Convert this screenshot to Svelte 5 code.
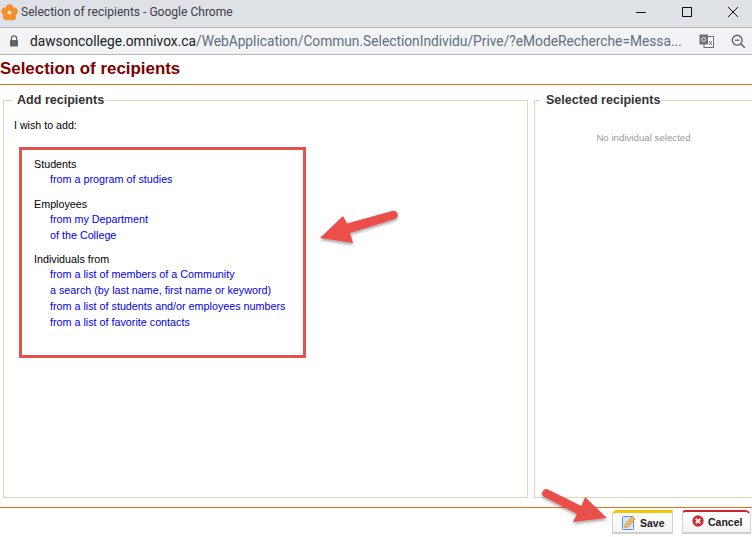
<script>
  const groups = [
    { title: 'Students', links: ['from a program of studies'] },
    { title: 'Employees', links: ['from my Department', 'of the College'] },
    { title: 'Individuals from', links: ['from a list of members of a Community', 'a search (by last name, first name or keyword)', 'from a list of students and/or employees numbers', 'from a list of favorite contacts'] }
  ];
</script>

<div class="win">
  <header class="titlebar">
    <svg class="flower" width="17" height="17" viewBox="0 0 18 18"><g fill="#f48f2e"><circle cx="9" cy="4.2" r="3.9"/><circle cx="13.8" cy="7.6" r="3.9"/><circle cx="12" cy="13.4" r="3.9"/><circle cx="6" cy="13.4" r="3.9"/><circle cx="4.2" cy="7.6" r="3.9"/></g><circle cx="9" cy="9" r="2.1" fill="#f9e3cc"/></svg>
    <span class="wintitle">Selection of recipients - Google Chrome</span>
    <div class="controls">
      <svg width="12" height="12" viewBox="0 0 12 12"><path d="M1 6.5h10" stroke="#111" stroke-width="1" fill="none"/></svg>
      <svg width="12" height="12" viewBox="0 0 12 12"><rect x="1.5" y="1.5" width="9" height="9" stroke="#111" stroke-width="1" fill="none"/></svg>
      <svg width="12" height="12" viewBox="0 0 12 12"><path d="M1 1l10 10M11 1L1 11" stroke="#111" stroke-width="1" fill="none"/></svg>
    </div>
  </header>
  <div class="urlbar">
    <svg class="lock" width="10" height="12" viewBox="0 0 10 12"><path d="M2.4 5V3.4a2.6 2.6 0 0 1 5.2 0V5" stroke="#5f6368" stroke-width="1.2" fill="none"/><rect x="1" y="5" width="8" height="6.6" rx="1" fill="#5f6368"/></svg>
    <span class="url"><span class="host">dawsoncollege.omnivox.ca</span>/WebApplication/Commun.SelectionIndividu/Prive/?eModeRecherche=Messa...</span>
    <svg class="translate" width="15" height="14" viewBox="0 0 15 14"><rect x="5" y="2.5" width="9.5" height="11" fill="#fff" stroke="#6d7074"/><rect x="0.5" y="0.5" width="8.5" height="10" fill="#6d7074"/><circle cx="4.7" cy="5.5" r="2" fill="none" stroke="#e8e8e8" stroke-width="1"/><path d="M10 7l3 4M13 7l-3 4" stroke="#6d7074"/></svg>
    <svg class="zoomicon" width="15" height="15" viewBox="0 0 15 15"><circle cx="6.2" cy="6.2" r="4.9" fill="none" stroke="#5f6368" stroke-width="1.4"/><path d="M9.8 9.8l4 4" stroke="#5f6368" stroke-width="1.6"/><path d="M3.8 6.2h4.8" stroke="#5f6368" stroke-width="1.3"/></svg>
  </div>

  <h1>Selection of recipients</h1>

  <main class="panels">
    <fieldset class="add">
      <legend>Add recipients</legend>
      <p class="wish">I wish to add:</p>
      <div class="box">
        {#each groups as g}
          <div class="group">
            <div class="gtitle">{g.title}</div>
            {#each g.links as l}<a href="#top" class="lnk">{l}</a>{/each}
          </div>
        {/each}
      </div>
    </fieldset>
    <fieldset class="sel">
      <legend>Selected recipients</legend>
      <p class="none">No individual selected</p>
    </fieldset>
  </main>

  <footer class="foot">
    <button class="btn save">
      <svg width="14" height="15" viewBox="0 0 14 15"><rect x="0.5" y="1.5" width="11" height="13" rx="1" fill="#d3e4f8" stroke="#5f93cf"/><path d="M2.5 12.5l.8-3.2 7-8 3 2.6-7 7.8z" fill="#f2b95a" stroke="#c08a35" stroke-width=".6"/></svg>
      Save
    </button>
    <button class="btn cancel">
      <svg class="x" width="12" height="12" viewBox="0 0 12 12"><circle cx="6" cy="6" r="5.7" fill="#c9303a"/><path d="M3.8 3.8l4.4 4.4M8.2 3.8l-4.4 4.4" stroke="#fff" stroke-width="1.8"/></svg>
      Cancel
    </button>
  </footer>

  <svg class="arrows" width="752" height="537" viewBox="0 0 752 537">
    <defs><filter id="sh" x="-20%" y="-20%" width="140%" height="150%"><feDropShadow dx="0" dy="2" stdDeviation="1.5" flood-color="#000" flood-opacity=".35"/></filter></defs>
    <g filter="url(#sh)" fill="#ea4f48">
      <path d="M320 238L343 216L347 223.5L392 211a4 4 0 0 1 3 8L350 233L353 243Z"/>
      <path d="M607 518L585 497L581.5 506L548 489.5a4 4 0 0 0 -3.5 7.5L577 514L573 522Z" />
    </g>
  </svg>
</div>

<style>
  :global(body) { margin: 0; background: #fff; }
  .win { position: relative; width: 752px; height: 537px; overflow: hidden; display: flex; flex-direction: column; font-family: "Liberation Sans", Arial, sans-serif; }
  .titlebar { height: 24px; padding: 0 0 3px 0; background: #dee1e6; border-bottom: 1px solid #b4b6b9; display: flex; align-items: center; box-sizing: content-box; flex: none; }
  .flower { flex: none; margin-left: 0.5px; }
  .wintitle { margin-left: 3.5px; font: 12.05px "Roboto", "Liberation Sans", sans-serif; color: #3c4043; }
  .controls { margin-left: auto; display: flex; gap: 34px; padding-right: 13px; align-items: center; }
  .urlbar { height: 26px; background: #f1f3f4; border-bottom: 1px solid #b4b6b9; display: flex; align-items: center; flex: none; padding-left: 9px; }
  .lock { flex: none; }
  .url { margin-left: 11px; width: 653px; flex: none; font: 13.75px "Roboto", "Liberation Sans", sans-serif; color: #5f7080; white-space: nowrap; }
  .host { color: #202124; }
  .translate { margin-left: 16px; flex: none; }
  .zoomicon { margin-left: 17px; flex: none; }
  h1 { margin: 0; height: 30px; line-height: 27px; font-size: 16.9px; font-weight: bold; color: #800000; border-bottom: 1px solid #e8711c; flex: none; box-sizing: border-box; }
  .panels { display: flex; gap: 6px; padding: 7px 0 9px 3px; height: 422px; box-sizing: border-box; flex: none; }
  fieldset { margin: 0; border: 1px solid #d9d8bd; padding: 0; min-width: 0; box-sizing: border-box; flex: none; }
  legend { font-size: 12.55px; font-weight: bold; color: #333; padding: 0 1px 0 5px; line-height: 16px; }
  .add { width: 525px; padding-left: 10px; }
  .add legend { margin-left: -2px; }
  .sel { width: 240px; }
  .sel legend { margin-left: 5px; padding-left: 6px; }
  .wish { margin: 10px 0 0; font-size: 10.67px; color: #000; line-height: 14px; }
  .box { margin-top: 15px; margin-left: 5px; width: 287px; height: 211px; border: 3px solid #e8504a; box-sizing: border-box; padding: 7px 12px; }
  .group { margin-bottom: 9px; }
  .gtitle { font-size: 10.75px; line-height: 15px; color: #000; }
  .lnk { display: block; margin-left: 16px; font-size: 10.75px; line-height: 15.8px; color: #0000f0; text-decoration: none; }
  .none { margin: 24px 0 0; text-align: center; font-size: 9.7px; color: #999; padding-right: 21px; }
  .foot { border-top: 1px solid #e8711c; flex: 1; display: flex; justify-content: flex-end; align-items: flex-start; gap: 9px; padding-top: 2px; }
  .btn { height: 24px; box-sizing: border-box; display: flex; align-items: center; gap: 4px; background: linear-gradient(#fff, #f3f3f3); border: 1px solid #d0d0d0; border-bottom-width: 2px; font: bold 10.5px "Liberation Sans", sans-serif; color: #222; padding: 0 0 0 9px; }
  .save { width: 61px; border-top: 3px solid #f7c600; border-radius: 5px 0 0 0; }
  .cancel { width: 69px; border-top: 2px solid #d01f2e; border-radius: 4px 6px 0 0; margin-right: 1px; }
  .x { margin-top: -3px; }
  .arrows { position: absolute; left: 0; top: 0; pointer-events: none; }
</style>
